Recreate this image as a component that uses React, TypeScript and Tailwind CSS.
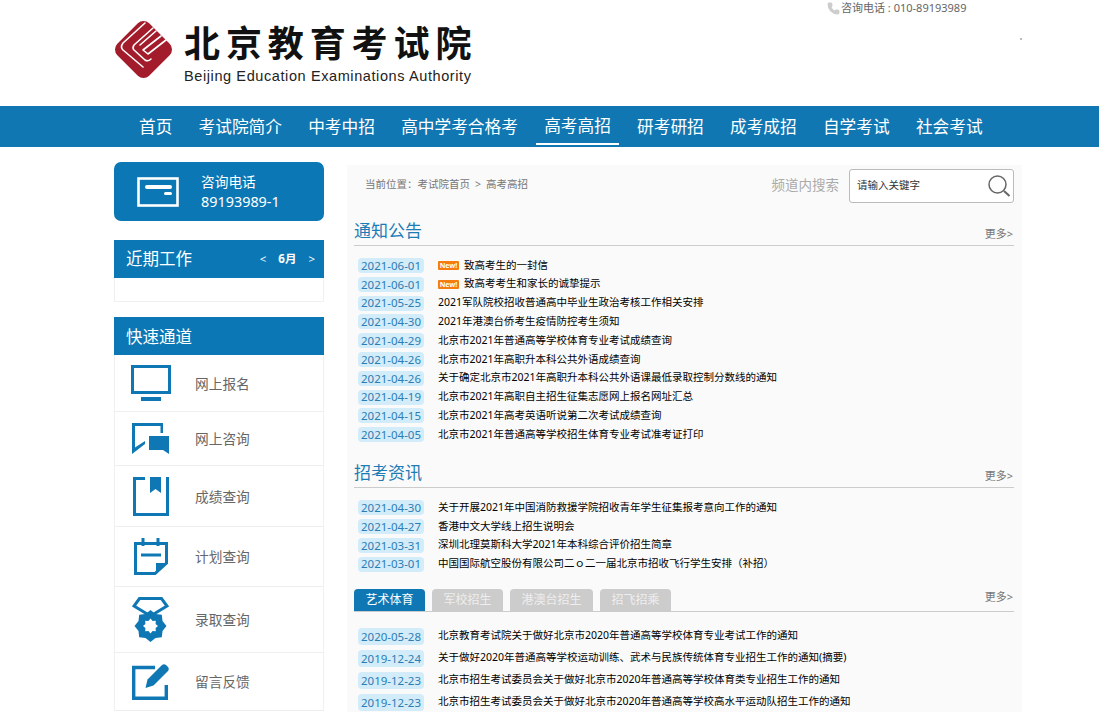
import { Phone } from "lucide-react";

const navItems = ["首页", "考试院简介", "中考中招", "高中学考合格考", "高考高招", "研考研招", "成考成招", "自学考试", "社会考试"];

const notices = [
  { date: "2021-06-01", title: "致高考生的一封信", isNew: true },
  { date: "2021-06-01", title: "致高考考生和家长的诚挚提示", isNew: true },
  { date: "2021-05-25", title: "2021军队院校招收普通高中毕业生政治考核工作相关安排" },
  { date: "2021-04-30", title: "2021年港澳台侨考生疫情防控考生须知" },
  { date: "2021-04-29", title: "北京市2021年普通高等学校体育专业考试成绩查询" },
  { date: "2021-04-26", title: "北京市2021年高职升本科公共外语成绩查询" },
  { date: "2021-04-26", title: "关于确定北京市2021年高职升本科公共外语课最低录取控制分数线的通知" },
  { date: "2021-04-19", title: "北京市2021年高职自主招生征集志愿网上报名网址汇总" },
  { date: "2021-04-15", title: "北京市2021年高考英语听说第二次考试成绩查询" },
  { date: "2021-04-05", title: "北京市2021年普通高等学校招生体育专业考试准考证打印" },
];

const news = [
  { date: "2021-04-30", title: "关于开展2021年中国消防救援学院招收青年学生征集报考意向工作的通知" },
  { date: "2021-04-27", title: "香港中文大学线上招生说明会" },
  { date: "2021-03-31", title: "深圳北理莫斯科大学2021年本科综合评价招生简章" },
  { date: "2021-03-01", title: "中国国际航空股份有限公司二ｏ二一届北京市招收飞行学生安排（补招）" },
];

const sports = [
  { date: "2020-05-28", title: "北京教育考试院关于做好北京市2020年普通高等学校体育专业考试工作的通知" },
  { date: "2019-12-24", title: "关于做好2020年普通高等学校运动训练、武术与民族传统体育专业招生工作的通知(摘要)" },
  { date: "2019-12-23", title: "北京市招生考试委员会关于做好北京市2020年普通高等学校体育类专业招生工作的通知" },
  { date: "2019-12-23", title: "北京市招生考试委员会关于做好北京市2020年普通高等学校高水平运动队招生工作的通知" },
];

// 8 pointed star for the medal icon
const star = (cx: number, cy: number, outer: number, inner: number) =>
  Array.from({ length: 16 }, (_, i) => {
    const r = i % 2 === 0 ? outer : inner;
    const a = (Math.PI / 8) * i - Math.PI / 2;
    return `${(cx + r * Math.cos(a)).toFixed(1)},${(cy + r * Math.sin(a)).toFixed(1)}`;
  }).join(" ");

const MonitorIcon = () => (
  <svg width="40" height="36" viewBox="0 0 40 36" fill="none">
    <rect x="1.5" y="1.5" width="37" height="26" fill="white" stroke="#0f78b4" strokeWidth="3" />
    <rect x="10" y="32" width="20" height="4" fill="#0f78b4" />
  </svg>
);

const ChatIcon = () => (
  <svg width="37" height="31" viewBox="0 0 37 31" fill="none">
    <path d="M0 0H31V10H28.5V3H3V24.5L13 18V21L0 31Z" fill="#0f78b4" />
    <path d="M17 13H37V31L31 27H17Z" fill="#0f78b4" />
  </svg>
);

const BookIcon = () => (
  <svg width="36" height="39" viewBox="0 0 36 39" fill="none">
    <path d="M12 1.5H1.5V37.5H34.5V0" stroke="#0f78b4" strokeWidth="3" />
    <path d="M17 0H28V16L22.5 12L17 16Z" fill="#0f78b4" />
  </svg>
);

const PlanIcon = () => (
  <svg width="34" height="37" viewBox="0 0 34 37" fill="none">
    <path d="M1.5 5.5H32.5V25L21 35.5H1.5Z" stroke="#0f78b4" strokeWidth="3" />
    <path d="M9 0V8M24 0V8" stroke="#0f78b4" strokeWidth="3" />
    <path d="M7 17H27" stroke="#0f78b4" strokeWidth="3" />
    <path d="M33 25H22V36Z" fill="#0f78b4" />
  </svg>
);

const MedalIcon = () => (
  <svg width="37" height="45" viewBox="0 0 37 45" fill="none">
    <path d="M7.5 1.5H29.5L35 9L18.5 19L2 9Z" stroke="#0f78b4" strokeWidth="3" />
    <polygon points={star(18.5, 29, 16, 13)} fill="#0f78b4" />
    <polygon points={star(18.5, 29, 7.5, 5.5)} fill="white" />
  </svg>
);

const EditIcon = () => (
  <svg width="37" height="36" viewBox="0 0 37 36" fill="none">
    <path d="M23 3.5H1.7V34.3H34.3V21" stroke="#0f78b4" strokeWidth="3.4" />
    <path d="M13.5 24L15.5 15.5L30 1Q32 -0.5 34 1L36 3Q37.5 5 36 7L21.5 21.5Z" fill="#0f78b4" />
  </svg>
);

const quickLinks = [
  { label: "网上报名", icon: <MonitorIcon />, height: "h-[57px]", pad: "pl-[16px]" },
  { label: "网上咨询", icon: <ChatIcon />, height: "h-[54px]", pad: "pl-[17px]" },
  { label: "成绩查询", icon: <BookIcon />, height: "h-[61px]", pad: "pl-[18px]" },
  { label: "计划查询", icon: <PlanIcon />, height: "h-[60px]", pad: "pl-[19px]" },
  { label: "录取查询", icon: <MedalIcon />, height: "h-[66px]", pad: "pl-[17px]" },
  { label: "留言反馈", icon: <EditIcon />, height: "h-[58px]", pad: "pl-[17px]" },
];

type Row = { date: string; title: string; isNew?: boolean };

const NewsList = ({ rows, tall }: { rows: Row[]; tall?: boolean }) => (
  <ul className={tall ? "flex flex-col gap-[4.6px]" : "flex flex-col gap-[3.8px]"}>
    {rows.map((row, i) => (
      <li key={i} className={tall ? "flex h-[17.4px] items-center" : "flex h-[15px] items-center"}>
        <span className={`ml-[4px] flex w-[66px] shrink-0 items-center justify-center rounded-[4px] bg-[#d3ecfa] text-[11.5px] text-[#2b7db3] ${tall ? "h-[17.4px]" : "h-[15px]"}`}>
          {row.date}
        </span>
        <span className="ml-[14px] flex items-center whitespace-nowrap text-[10.5px] text-black">
          {row.isNew && (
            <span className="mr-[5px] flex h-[9px] w-[21px] items-center justify-center rounded-[1px] bg-[#f57c0e] text-[7px] font-bold leading-none text-white">
              New!
            </span>
          )}
          {row.title}
        </span>
      </li>
    ))}
  </ul>
);

const SectionTitle = ({ title }: { title: string }) => (
  <div className="flex h-[30px] items-center justify-between border-b border-[#cccccc]">
    <h2 className="text-[17px] leading-none text-[#1c7cb6]">{title}</h2>
    <span className="mt-[8px] mr-[1px] text-[11px] text-[#777777]">更多&gt;</span>
  </div>
);

export default function App() {
  return (
    <div className="h-[712px] w-[1099px] overflow-hidden bg-white font-['Noto_Sans','Noto_Sans_CJK_SC',sans-serif]">
      <header className="relative h-[106px]">
        <div className="flex items-start pl-[114px] pt-[20px]">
          <svg width="60" height="60" viewBox="0 0 60 60" className="shrink-0">
            <rect x="7" y="7" width="45" height="45" rx="8" transform="rotate(45 29.5 29.5)" fill="#a31c2b" />
            <g fill="none" stroke="white" strokeWidth="1.6" strokeLinecap="round" strokeLinejoin="round">
              <path d="M31 3L9 23Q6 27 9 30L29 47" />
              <path d="M39 8L20 25Q18 28 20 30L31 40Q34 42 37 39" />
              <path d="M47 16L29 30L34 34L52 20" />
              <path d="M42 11L26 25" />
            </g>
          </svg>
          <div className="ml-[10px] flex flex-col">
            <div className="h-[43px] whitespace-nowrap font-['Noto_Sans_CJK_SC',sans-serif] text-[36px] font-bold leading-[43px] tracking-[5.9px] text-[#111111]">
              北京教育考试院
            </div>
            <div className="mt-[4px] whitespace-nowrap font-['Liberation_Sans',sans-serif] text-[14.5px] leading-[18px] tracking-[0.6px] text-[#222222]">
              Beijing Education Examinations Authority
            </div>
          </div>
        </div>
        <div className="absolute left-[827px] top-0 flex h-[16px] items-center">
          <Phone size={13} fill="#cccccc" stroke="#cccccc" className="mr-[1px]" />
          <span className="whitespace-nowrap text-[11px] text-[#666666]">咨询电话 : 010-89193989</span>
        </div>
        <div className="absolute left-[1020px] top-[38px] h-[2px] w-[2px] bg-[#bbbbbb]" />
      </header>

      <nav className="flex h-[41px] items-center gap-[10.2px] bg-[#1077b3] pl-[131px]">
        {navItems.map((item) => (
          <div
            key={item}
            className={`flex h-[36px] items-center whitespace-nowrap px-[8px] text-[16.7px] text-white ${item === "高考高招" ? "border-b-2 border-white" : ""}`}
          >
            {item}
          </div>
        ))}
      </nav>

      <main className="ml-[114px] flex w-[908px] gap-[23px]">
        <aside className="w-[210px] shrink-0 pt-[15px]">
          <div className="flex h-[59px] items-center rounded-[7px] bg-[#0b78b5] pl-[23px] text-white">
            <svg width="42" height="30" viewBox="0 0 42 30" fill="none">
              <rect x="1.5" y="1.5" width="39" height="27" stroke="white" strokeWidth="2.6" />
              <rect x="8" y="8" width="27" height="4" rx="2" fill="white" />
              <rect x="27" y="15" width="8" height="3" rx="1.5" fill="white" />
            </svg>
            <div className="ml-[22px] flex flex-col">
              <span className="text-[13.7px] leading-[20px]">咨询电话</span>
              <span className="text-[14.4px] leading-[20px]">89193989-1</span>
            </div>
          </div>

          <div className="mt-[19px] flex h-[38px] items-center justify-between bg-[#0b78b5] pl-[12px] pr-[9px] text-white">
            <span className="pt-[1px] text-[16.5px]">近期工作</span>
            <span className="flex items-center gap-[12px] text-[11.5px]">
              <span>&lt;</span>
              <span className="font-bold">6月</span>
              <span>&gt;</span>
            </span>
          </div>
          <div className="h-[24px] border-x border-b border-[#f0f0f0]" />

          <div className="mt-[15px] flex h-[38px] items-center bg-[#0b78b5] pl-[12px] text-white">
            <span className="pt-[3px] text-[16.5px]">快速通道</span>
          </div>
          <div className="border-x border-[#f0f0f0]">
            {quickLinks.map((link) => (
              <div key={link.label} className={`flex items-center border-b border-[#eeeeee] ${link.height}`}>
                <div className={`flex w-[80px] shrink-0 items-center ${link.pad}`}>{link.icon}</div>
                <span className="pt-[2px] whitespace-nowrap text-[13.7px] text-[#666666]">{link.label}</span>
              </div>
            ))}
          </div>
        </aside>

        <section className="mt-[18px] h-[560px] flex-1 bg-[#fafafa] pl-[7px] pr-[8px]">
          <div className="flex h-[38px] items-center justify-between pl-[11px] pt-[3px]">
            <span className="-mt-[2px] text-[10.5px] text-[#777777]">
              当前位置：考试院首页<span className="mx-[5px]">&gt;</span>高考高招
            </span>
            <div className="flex items-center">
              <span className="text-[13.5px] text-[#aaaaaa]">频道内搜索</span>
              <div className="ml-[10px] flex h-[34px] w-[165px] items-center justify-between rounded-[3px] border border-[#bbbbbb] bg-white pl-[7px] pr-[2px]">
                <span className="text-[10.5px] text-[#333333]">请输入关键字</span>
                <svg width="24" height="24" viewBox="0 0 24 24" fill="none" stroke="#666666" strokeWidth="1.5">
                  <circle cx="10.5" cy="10.5" r="8.5" />
                  <path d="M17 17L22.5 22" strokeWidth="2" />
                </svg>
              </div>
            </div>
          </div>

          <div className="mt-[13px]">
            <SectionTitle title="通知公告" />
            <div className="mt-[12px]">
              <NewsList rows={notices} />
            </div>
          </div>

          <div className="mt-[16px]">
            <SectionTitle title="招考资讯" />
            <div className="mt-[12px]">
              <NewsList rows={news} />
            </div>
          </div>

          <div className="mt-[17px]">
            <div className="flex h-[23px] items-end justify-between border-b border-[#cccccc]">
              <div className="flex gap-[7px]">
                <span className="flex h-[22px] w-[71px] items-center justify-center rounded-t-[4px] bg-[#0f78b4] text-[12px] text-white">艺术体育</span>
                <span className="flex h-[22px] w-[71px] items-center justify-center rounded-t-[4px] bg-[#cccccc] text-[12px] text-[#eeeeee]">军校招生</span>
                <span className="flex h-[22px] w-[83px] items-center justify-center rounded-t-[4px] bg-[#cccccc] text-[12px] text-[#eeeeee]">港澳台招生</span>
                <span className="flex h-[22px] w-[71px] items-center justify-center rounded-t-[4px] bg-[#cccccc] text-[12px] text-[#eeeeee]">招飞招乘</span>
              </div>
              <span className="mb-[5px] mr-[1px] text-[11px] text-[#777777]">更多&gt;</span>
            </div>
            <div className="mt-[16px]">
              <NewsList rows={sports} tall />
            </div>
          </div>
        </section>
      </main>
    </div>
  );
}
